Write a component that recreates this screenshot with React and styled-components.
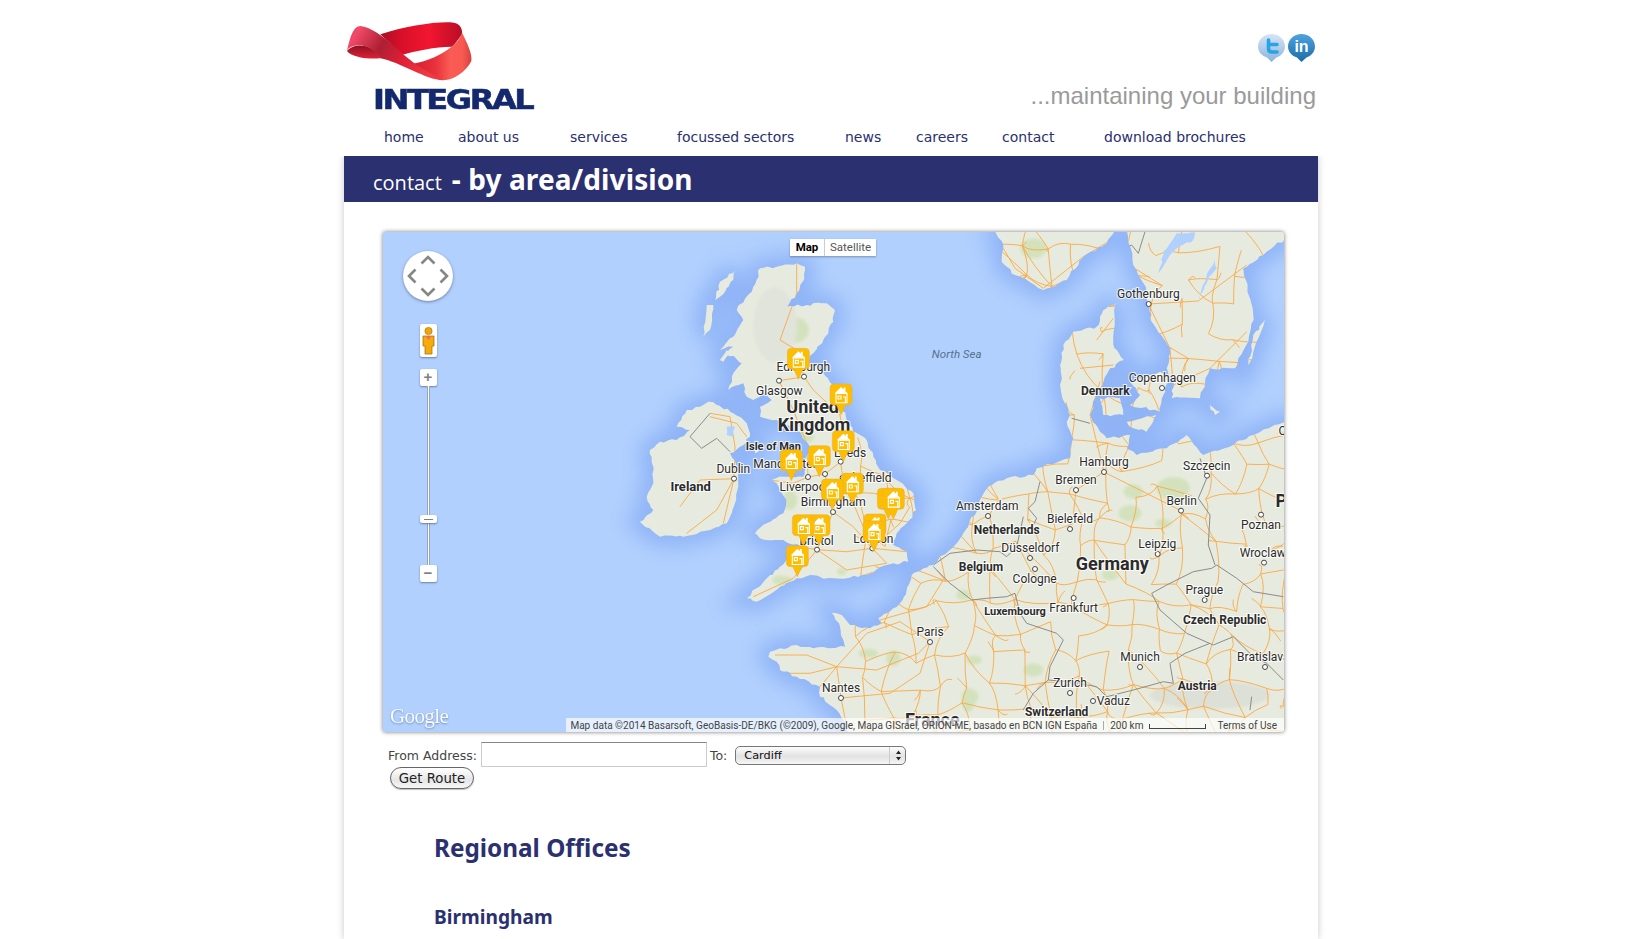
import React from "react";
import styled, { createGlobalStyle } from "styled-components";

// map data is noted in crop units (3x) from a few origins, converted to page px
const Z4 = [620, 250];
const Z5 = [900, 225];
const Z6 = [900, 500];
const Z8 = [730, 540];

const makeRandom = (start) => {
  let seed = start;
  return () => {
    seed = (seed * 16807) % 2147483647;
    return seed / 2147483647;
  };
};

const pts = (o, s) =>
  s
    .trim()
    .split(/\s+/)
    .map((p) => {
      const [x, y] = p.split(",").map(Number);
      return [o[0] + x / 3, o[1] + y / 3];
    });
const line = (list) =>
  "M" + list.map((p) => `${p[0].toFixed(1)} ${p[1].toFixed(1)}`).join("L");

// coasts are never straight: break each edge up and push the points about a bit
const coastRandom = makeRandom(977);
const shape = (list) => {
  const out = [];
  list.forEach((p, i) => {
    const q = list[(i + 1) % list.length];
    out.push(p);
    const len = Math.hypot(q[0] - p[0], q[1] - p[1]);
    const parts = Math.min(6, Math.floor(len / 3.5));
    for (let k = 1; k < parts; k++) {
      const t = k / parts;
      out.push([
        p[0] + (q[0] - p[0]) * t + (coastRandom() - 0.5) * 2.6,
        p[1] + (q[1] - p[1]) * t + (coastRandom() - 0.5) * 2.6,
      ]);
    }
  });
  return line(out) + "Z";
};

const BRITAIN = shape(
  pts(
    Z4,
    `420,55 470,50 530,40 555,50 548,95 530,130 500,170 560,165 620,160 645,180 640,215 610,270 580,310 550,345 590,350 610,370
     640,405 665,470 680,510 700,545 740,570 760,620 780,660 830,690 880,730 888,780 860,820 830,850 815,880 860,905 865,935 800,945
     740,975 680,985 620,985 570,975 530,985 480,1010 410,1055 380,1045 440,985 480,950 510,925 540,890 480,870 420,865 405,850 440,820
     490,790 500,750 470,700 455,690 490,680 510,680 550,680 560,650 545,640 570,590 540,545 490,520 470,510 420,500 420,470 455,450
     440,430 400,450 380,440 370,400 325,420 340,370 365,340 320,310 340,290 300,300 340,260 370,210 350,180 400,110`
  )
);
const IRELAND = shape(
  pts(
    Z4,
    `265,455 290,465 340,490 380,520 390,560 360,590 330,610 355,660 355,710 345,760 320,820 270,840 190,860 120,860 60,815 100,780
     80,740 100,700 100,650 90,600 120,575 170,570 210,540 170,530 200,480 240,470`
  )
);
const CONTINENT = shape([
  ...pts(
    Z5,
    `650,235 610,255 590,305 520,320 490,360 482,430 485,510 510,570 500,590 520,640 510,700 410,730 400,750 320,760 265,785 245,815 225,870`
  ),
  ...pts(Z6, `210,60 190,100 170,130 100,195 40,220 20,270 0,310`),
  ...pts(
    Z8,
    `490,205 445,235 455,250 420,265 360,255 335,225 305,218 330,260 340,300 345,320 250,325 200,315 120,335 115,350 140,365 150,390
     200,410 270,440 270,470 320,510 350,560 360,590`
  ),
  [1295, 740],
  [1295, 422],
  ...pts(
    Z5,
    `1155,590 1060,630 1000,660 910,690 860,630 835,650 800,670 710,690 680,670 690,630 620,640 600,620 570,570 585,520 630,430 672,405 640,360 645,240`
  ),
]);
const ISLANDS = [
  pts(Z5, `285,15 310,60 305,110 345,150 430,195 500,165 550,95 620,55 645,15`),
  pts(
    Z5,
    `680,15 700,120 740,200 745,235 755,290 790,340 810,370 800,430 820,470 815,520 900,520 930,430 1005,430 1045,350 1060,270 1030,130 1090,90 1155,40 1155,15`
  ),
  pts(Z5, `690,470 780,440 810,460 790,510 780,560 690,540 720,510`),
  pts(Z5, `600,520 660,520 670,570 610,570`),
  pts(Z5, `680,590 770,570 740,620 700,610`),
  pts(Z5, `930,540 960,560 945,570`),
  pts(Z5, `1045,420 1095,285 1060,330`),
  pts(Z4, `345,60 300,95 285,150 300,140 340,90`),
  pts(Z4, `260,165 280,165 270,240 250,260`),
  pts(Z4, `300,330 320,300 330,310 310,335`),
  pts(Z4, `405,590 412,585 415,605 405,610`),
]
  .map(shape)
  .join(" ");
const LAND = [BRITAIN, IRELAND, CONTINENT, ISLANDS].join(" ");
const LAKES = [
  pts(Z5, `775,145 830,70 880,45 885,22 830,25 790,90`),
  pts(Z5, `895,225 915,170 945,95 950,130 920,175`),
  pts(Z4, `320,530 345,530 340,560 320,555`),
]
  .map(shape)
  .join(" ");

const GREEN = [
  [Z4, 525, 240, 42, 38],
  [Z4, 555, 560, 28, 20],
  [Z4, 510, 750, 22, 30],
  [Z4, 480, 990, 24, 14],
  [Z5, 400, 70, 40, 30],
  [Z5, 820, 790, 50, 35],
  [Z5, 700, 800, 30, 22],
  [Z6, 190, 285, 22, 16],
  [Z6, 630, 225, 25, 16],
  [Z6, 220, 480, 22, 14],
  [Z6, 400, 510, 30, 20],
  [Z6, 210, 590, 26, 24],
  [Z6, 690, 40, 35, 25],
  [Z6, 790, 70, 25, 14],
  [Z8, 415, 340, 30, 14],
  [Z8, 490, 355, 22, 24],
  [Z8, 715, 480, 20, 36],
  [Z8, 170, 125, 18, 16],
  [Z8, 335, 95, 14, 10],
  [Z8, 740, 360, 16, 12],
];

// dense road net for the continent, seeded so that it is the same each run
const makeRoads = () => {
  const rnd = makeRandom(42);
  const step = 27;
  const cols = 17;
  const rows = 20;
  const grid = [];
  for (let r = 0; r < rows; r++) {
    const row = [];
    for (let c = 0; c < cols; c++) {
      row.push([
        860 + c * step + (rnd() - 0.5) * 18,
        225 + r * step + (rnd() - 0.5) * 18,
      ]);
    }
    grid.push(row);
  }
  let out = "";
  const seg = (a, b) => {
    const mx = (a[0] + b[0]) / 2 + (rnd() - 0.5) * 11;
    const my = (a[1] + b[1]) / 2 + (rnd() - 0.5) * 11;
    out += `M${a[0].toFixed(1)} ${a[1].toFixed(1)}Q${mx.toFixed(1)} ${my.toFixed(1)} ${b[0].toFixed(1)} ${b[1].toFixed(1)}`;
  };
  for (let r = 0; r < rows; r++) {
    for (let c = 0; c < cols; c++) {
      const p = grid[r][c];
      const chance = p[1] < 430 ? 0.45 : 0.8;
      if (c + 1 < cols && rnd() < chance) seg(p, grid[r][c + 1]);
      if (r + 1 < rows && rnd() < chance) seg(p, grid[r + 1][c]);
      if (c + 1 < cols && r + 1 < rows && rnd() < 0.2) seg(p, grid[r + 1][c + 1]);
      if (rnd() < 0.35)
        seg(p, [p[0] + (rnd() - 0.5) * 26, p[1] + (rnd() - 0.5) * 26]);
    }
  }
  return out;
};

const WEST_ROADS = [
  [Z4, "477,392 552,380 580,420 660,495 670,560 662,635 668,683 700,760 757,895"],
  [Z4, "477,392 520,480 560,580 564,681 615,672 662,635"],
  [Z4, "615,672 639,786 591,899 480,880"],
  [Z4, "639,786 700,830 757,895 860,905"],
  [Z4, "591,899 680,905 757,895 840,820 870,770"],
  [Z4, "591,899 520,985 400,1040"],
  [Z4, "757,895 800,940 680,960 591,899"],
  [Z4, "450,690 520,700 564,681"],
  [Z4, "530,40 530,130 480,270 530,300 552,380"],
  [Z4, "342,686 240,690 180,770"],
  [Z4, "342,686 290,780 200,850"],
  [Z4, "342,686 345,590 330,500 270,490"],
  [Z4, "342,686 310,820"],
  [Z4, "270,500 350,520 380,560"],
  [Z8, "135,345 230,345 320,380 410,280 510,245 600,305"],
  [Z8, "320,380 333,474 350,560"],
  [Z8, "320,380 440,390 565,340 600,305"],
  [Z8, "150,400 240,400 320,380 270,440"],
  [Z8, "450,240 590,200 640,120 560,90"],
  [Z8, "333,474 480,460 570,400 600,305"],
  [Z5, "310,70 345,130 430,190 550,95 625,50"],
  [Z5, "745,237 810,370 820,480"],
  [Z5, "745,237 895,228 1040,120"],
  [Z5, "820,480 930,430 1040,320"],
  [Z5, "600,470 570,570 612,741"],
  [Z5, "612,741 528,795 520,870"],
  [Z5, "612,741 843,857"],
  [Z5, "590,345 640,280"],
  [Z5, "540,430 640,420"],
]
  .map(([o, s]) => line(pts(o, s)))
  .join("");
const ROADS = makeRoads() + WEST_ROADS;

const BORDERS = [
  [Z4, "270,490 210,560 245,595 290,565 330,605"],
  [Z5, "420,770 405,830 385,850 410,880 400,900"],
  [Z6, "370,50 350,140 320,170 300,155 230,150 150,160 100,195"],
  [Z6, "100,200 150,250 215,300 260,295 320,290 345,280 360,340 380,370 470,400 490,420 450,500 445,540 400,580 370,630"],
  [Z6, "445,540 510,545 590,560 620,590 700,570 790,545 820,550 810,490 855,460 930,430"],
  [Z6, "755,280 800,255 880,215 935,205 950,195 1010,235 1060,275 1150,290"],
  [Z6, "780,330 860,400 940,435 1000,410 1060,470 1100,490 1150,540"],
  [Z6, "755,280 780,330"],
  [Z5, "900,700 920,760 895,820 930,870 925,960 945,1020"],
  [Z5, "515,580 570,595"],
  [Z5, "655,80 695,60 715,85 735,20"],
  [Z6, "1055,590 1050,630"],
]
  .map(([o, s]) => line(pts(o, s)))
  .join("");

const CITY_DOTS = [
  [Z4, 477, 392], [Z4, 552, 380], [Z4, 342, 686], [Z4, 615, 672], [Z4, 564, 681],
  [Z4, 662, 635], [Z4, 639, 786], [Z4, 591, 899], [Z4, 757, 895], [Z4, 668, 683],
  [Z5, 746, 237], [Z5, 786, 489], [Z5, 612, 741], [Z5, 921, 752], [Z5, 528, 795],
  [Z5, 264, 873], [Z5, 843, 857], [Z6, 510, 87], [Z6, 1083, 44], [Z6, 390, 174],
  [Z6, 405, 207], [Z6, 773, 162], [Z6, 1092, 188], [Z6, 914, 300], [Z6, 521, 294],
  [Z6, 90, 426], [Z6, 720, 501], [Z6, 1095, 501], [Z6, 510, 579], [Z6, 579, 603],
  [Z8, 333, 474],
];

const LABELS = [
  [Z4, 550, 352, "Edinburgh"], [Z4, 478, 424, "Glasgow"], [Z4, 578, 468, "United", "big"],
  [Z4, 582, 524, "Kingdom", "big"], [Z4, 460, 588, "Isle of Man", "small"],
  [Z4, 495, 642, "Manchester"], [Z4, 690, 608, "Leeds"], [Z4, 552, 712, "Liverpool"],
  [Z4, 640, 757, "Birmingham"], [Z4, 745, 685, "Sheffield"], [Z4, 340, 657, "Dublin"],
  [Z4, 212, 710, "Ireland", "mid"], [Z4, 760, 866, "London"], [Z4, 590, 872, "Bristol"],
  [Z5, 170, 387, "North Sea", "sea"], [Z5, 745, 208, "Gothenburg"], [Z5, 787, 460, "Copenhagen"],
  [Z5, 616, 499, "Denmark", "region"], [Z5, 612, 712, "Hamburg"], [Z5, 920, 724, "Szczecin"],
  [Z5, 528, 766, "Bremen"], [Z5, 262, 843, "Amsterdam"], [Z5, 845, 828, "Berlin"],
  [Z6, 510, 57, "Bielefeld"], [Z6, 1083, 75, "Poznan"], [Z6, 320, 91, "Netherlands", "region"],
  [Z6, 391, 145, "Düsseldorf"], [Z6, 243, 202, "Belgium", "region"], [Z6, 404, 238, "Cologne"],
  [Z6, 637, 191, "Germany", "big"], [Z6, 772, 133, "Leipzig"], [Z6, 1088, 160, "Wroclaw"],
  [Z6, 913, 271, "Prague"], [Z6, 974, 361, "Czech Republic", "region"], [Z6, 345, 334, "Luxembourg", "small"],
  [Z6, 521, 325, "Frankfurt"], [Z6, 90, 397, "Paris"], [Z6, 720, 472, "Munich"],
  [Z6, 1090, 472, "Bratislava"], [Z6, 892, 559, "Austria", "region"], [Z6, 510, 550, "Zurich"],
  [Z6, 640, 604, "Vaduz"], [Z6, 470, 637, "Switzerland", "region"], [Z8, 333, 445, "Nantes"],
  [Z8, 607, 538, "France", "big"], [Z5, 1211, 825, "Poland", "big"], [Z5, 1195, 618, "Olsztyn"],
];

const MARKERS = [
  [535, 388], [663, 495], [670, 635], [598, 680], [514, 692], [697, 762], [637, 780],
  [805, 808], [820, 808], [765, 885], [762, 905], [597, 887], [550, 887], [532, 980],
];

const NAV_ITEMS = [
  ["home", 74],
  ["about us", 112],
  ["services", 107],
  ["focussed sectors", 168],
  ["news", 71],
  ["careers", 86],
  ["contact", 102],
  ["download brochures", 160],
];

const App = () => {
  return (
    <>
      <GlobalStyle />
      <Page>
        <Header>
          <Logo>
            <svg width="140" height="70" viewBox="0 0 420 210">
              <defs>
                <linearGradient id="bandTop" x1="0" x2="1" y1="0" y2="0">
                  <stop offset="0" stopColor="#a80f24" />
                  <stop offset="0.25" stopColor="#d80f2a" />
                  <stop offset="0.6" stopColor="#f21630" />
                  <stop offset="1" stopColor="#b90d26" />
                </linearGradient>
                <linearGradient id="bandFall" x1="0" x2="1" y1="0" y2="0">
                  <stop offset="0" stopColor="#d81a30" />
                  <stop offset="0.4" stopColor="#e8323c" />
                  <stop offset="0.65" stopColor="#fa5c55" />
                  <stop offset="0.85" stopColor="#f85a52" />
                  <stop offset="1" stopColor="#d3423c" />
                </linearGradient>
                <linearGradient id="bandLeft" x1="0" x2="1" y1="0" y2="0.35">
                  <stop offset="0" stopColor="#d62a45" />
                  <stop offset="0.12" stopColor="#f24b6b" />
                  <stop offset="0.42" stopColor="#ad1f33" />
                  <stop offset="0.7" stopColor="#e01f36" />
                  <stop offset="1" stopColor="#ee3a42" />
                </linearGradient>
                <linearGradient id="bandUnder" x1="0" x2="0" y1="0" y2="1">
                  <stop offset="0" stopColor="#8f1022" />
                  <stop offset="1" stopColor="#e02238" />
                </linearGradient>
              </defs>
              <path
                d="M115 55C190 30 290 15 335 20C355 22 362 40 360 55C345 75 335 90 329 92C280 92 220 105 179 117C160 95 135 75 115 55Z"
                fill="url(#bandTop)"
              />
              <path
                d="M360 50C375 80 392 115 388 135C370 170 335 190 310 192C280 190 240 165 209 144C260 135 300 115 329 92C345 80 355 65 360 50Z"
                fill="url(#bandFall)"
              />
              <path
                d="M15 105C25 90 50 85 70 90C95 97 110 115 115 127C80 130 30 125 15 105Z"
                fill="url(#bandUnder)"
              />
              <path
                d="M15 103C25 60 35 30 55 30C85 32 120 60 150 85C180 112 215 145 260 168C285 182 300 190 312 192C280 195 250 180 215 165C180 150 140 130 115 127C100 100 70 85 45 88C30 90 20 95 15 103Z"
                fill="url(#bandLeft)"
              />
            </svg>
            <LogoWord>INTEGRAL</LogoWord>
          </Logo>
          <HeaderSide>
            <Social>
              <svg width="29" height="30" viewBox="0 0 29 30">
                <defs>
                  <linearGradient id="twBubble" x1="0" x2="0" y1="0" y2="1">
                    <stop offset="0" stopColor="#d6e5f6" />
                    <stop offset="1" stopColor="#8cb3de" />
                  </linearGradient>
                </defs>
                <path
                  d="M14.5 1C22 1 28 6.5 28 13.5C28 19 24 23 19.5 24.5L14.5 29L10 24.5C5 23 1 19 1 13.5C1 6.5 7 1 14.5 1Z"
                  fill="url(#twBubble)"
                />
                <path
                  d="M11.5 7V15.5Q11.5 19 15 19H20M11.5 11.5H20"
                  fill="none"
                  stroke="#27a4e4"
                  strokeWidth="3.6"
                  strokeLinecap="round"
                />
              </svg>
              <svg width="29" height="30" viewBox="0 0 29 30">
                <defs>
                  <linearGradient id="inBubble" x1="0" x2="0" y1="0" y2="1">
                    <stop offset="0" stopColor="#4ea3df" />
                    <stop offset="1" stopColor="#1b6ba6" />
                  </linearGradient>
                </defs>
                <path
                  d="M14.5 1C22 1 28 6.5 28 13.5C28 19 24 23 19.5 24.5L14.5 29L10 24.5C5 23 1 19 1 13.5C1 6.5 7 1 14.5 1Z"
                  fill="url(#inBubble)"
                />
                <LinkedText x="14.5" y="19">
                  in
                </LinkedText>
              </svg>
            </Social>
            <Tagline>...maintaining your building</Tagline>
          </HeaderSide>
        </Header>

        <Nav>
          {NAV_ITEMS.map(([label, width]) => (
            <NavLink key={label} href="#" $width={width}>
              {label}
            </NavLink>
          ))}
        </Nav>

        <Panel>
          <Banner>
            <BannerLight>contact</BannerLight>
            <BannerBold>- by area/division</BannerBold>
          </Banner>

          <Content>
            <MapFrame>
              <MapSvg viewBox="383 232 901 500">
                <defs>
                  <clipPath id="landClip">
                    <path d={LAND} />
                  </clipPath>
                  <filter id="coastGlow" x="-20%" y="-20%" width="140%" height="140%">
                    <feGaussianBlur stdDeviation="10" />
                  </filter>
                  <filter id="softGreen" x="-30%" y="-30%" width="160%" height="160%">
                    <feGaussianBlur stdDeviation="1.4" />
                  </filter>
                  <g id="pin">
                    <path
                      d="M4 0H18A4 4 0 0 1 22 4V17A4 4 0 0 1 18 21H15.5L11 31L6.5 21H4A4 4 0 0 1 0 17V4A4 4 0 0 1 4 0Z"
                      fill="#fdbd00"
                      stroke="#e3ad4a"
                      strokeWidth="0.5"
                    />
                    <path
                      d="M4.5 9.5L11 3L13.5 5.4V3.4H15.4V7.2L17.8 9.5Z"
                      fill="#fff"
                    />
                    <path
                      d="M6 9.5H17V18.8H6ZM8 12H11V15H8ZM13 13H15.4V18.8"
                      fill="none"
                      stroke="#fff"
                      strokeWidth="1.1"
                    />
                  </g>
                </defs>
                <rect x="383" y="232" width="901" height="500" fill="#b1d0fe" />
                <path
                  d={LAND}
                  fill="#8cb1f6"
                  stroke="#8cb1f6"
                  strokeWidth="20"
                  opacity="0.9"
                  filter="url(#coastGlow)"
                />
                <path d={LAND} fill="#e7ebdf" />
                <g clipPath="url(#landClip)">
                  <g filter="url(#softGreen)">
                    {GREEN.map(([o, x, y, rx, ry], i) => (
                      <ellipse
                        key={i}
                        cx={o[0] + x / 3}
                        cy={o[1] + y / 3}
                        rx={rx / 3}
                        ry={ry / 3}
                        fill="#d3e2bd"
                      />
                    ))}
                    <ellipse cx="1210" cy="695" rx="60" ry="14" fill="#dde0d7" />
                    <ellipse cx="775" cy="325" rx="22" ry="38" fill="#e1e4da" />
                  </g>
                  <path d={ROADS} fill="none" stroke="#f9a943" strokeWidth="0.9" />
                  <path d={LAKES} fill="#b1d0fe" />
                  <path d={BORDERS} fill="none" stroke="#8b8b88" strokeWidth="1" />
                </g>
                {CITY_DOTS.map(([o, x, y], i) => (
                  <circle
                    key={i}
                    cx={o[0] + x / 3}
                    cy={o[1] + y / 3}
                    r="2.5"
                    fill="#fff"
                    stroke="#333"
                    strokeWidth="0.9"
                  />
                ))}
                {LABELS.map(([o, x, y, text, kind]) => (
                  <MapLabel key={text} x={o[0] + x / 3} y={o[1] + y / 3} $kind={kind}>
                    {text}
                  </MapLabel>
                ))}
                {MARKERS.map(([x, y], i) => (
                  <use
                    key={i}
                    href="#pin"
                    x={Z4[0] + x / 3 - 11}
                    y={Z4[1] + y / 3 - 31}
                  />
                ))}
              </MapSvg>

              <MapControls>
                <PanControl>
                  <svg width="50" height="50" viewBox="0 0 50 50">
                    <path
                      d="M18.5 12.5L25 6L31.5 12.5M18.5 37.5L25 44L31.5 37.5M12.5 18.5L6 25L12.5 31.5M37.5 18.5L44 25L37.5 31.5"
                      fill="none"
                      stroke="#868686"
                      strokeWidth="2.6"
                    />
                  </svg>
                </PanControl>
                <PegmanBox>
                  <svg width="13" height="28" viewBox="0 0 13 28">
                    <circle cx="6.5" cy="4" r="3.6" fill="#f0a70a" stroke="#b86f00" strokeWidth="0.7" />
                    <path
                      d="M1 9H12V19H10V27H3V19H1Z"
                      fill="#f5ab0c"
                      stroke="#a86400"
                      strokeWidth="0.7"
                    />
                    <path d="M3.5 9H9.5L6.5 13Z" fill="#ec6a6a" />
                  </svg>
                </PegmanBox>
                <ZoomStack>
                  <ZoomButton>+</ZoomButton>
                  <ZoomTrack>
                    <ZoomHandle />
                  </ZoomTrack>
                  <ZoomButton>−</ZoomButton>
                </ZoomStack>
              </MapControls>

              <MapTypes>
                <MapType $active>Map</MapType>
                <MapType>Satellite</MapType>
              </MapTypes>

              <GoogleMark>Google</GoogleMark>

              <Attribution>
                <span>
                  Map data ©2014 Basarsoft, GeoBasis-DE/BKG (©2009), Google, Mapa GISrael,
                  ORION-ME, basado en BCN IGN España
                </span>
                <ScaleText>200 km</ScaleText>
                <ScaleBar />
                <span>Terms of Use</span>
              </Attribution>
            </MapFrame>

            <RouteForm>
              <RouteRow>
                <FormLabel htmlFor="from">From Address:</FormLabel>
                <AddressInput id="from" type="text" />
                <FormLabel htmlFor="to">To:</FormLabel>
                <SelectWrap>
                  <OfficeSelect id="to" defaultValue="Cardiff">
                    <option>Cardiff</option>
                  </OfficeSelect>
                  <SelectArrows>
                    <svg width="7" height="11" viewBox="0 0 7 11">
                      <path d="M3.5 0.5L6 4H1ZM3.5 10.5L6 7H1Z" fill="#222" />
                    </svg>
                  </SelectArrows>
                </SelectWrap>
              </RouteRow>
              <RouteButton type="button">Get Route</RouteButton>
            </RouteForm>

            <Offices>
              <OfficesTitle>Regional Offices</OfficesTitle>
              <OfficeName>Birmingham</OfficeName>
            </Offices>
          </Content>
        </Panel>
      </Page>
    </>
  );
};

const GlobalStyle = createGlobalStyle`
  html, body {
    margin: 0;
    height: 100%;
    overflow: hidden;
    background: #fff;
  }
`;

const Page = styled.div`
  width: 974px;
  margin-left: 344px;
  font-family: "DejaVu Sans", Verdana, sans-serif;
`;

const Header = styled.header`
  display: flex;
  justify-content: space-between;
  height: 120px;
`;

const Logo = styled.div`
  display: flex;
  flex-direction: column;
  padding-top: 16px;
  margin-left: -2px;
  svg {
    display: block;
  }
`;

const LogoWord = styled.div`
  margin: 2px 0 0 31px;
  font-family: "DejaVu Sans", sans-serif;
  font-weight: 700;
  font-size: 26px;
  line-height: 24px;
  letter-spacing: -2px;
  color: #14286e;
  -webkit-text-stroke: 0.5px #14286e;
  transform: scaleX(1.235);
  transform-origin: left center;
`;

const HeaderSide = styled.div`
  display: flex;
  flex-direction: column;
  align-items: flex-end;
  padding: 33px 2px 0 0;
`;

const Social = styled.div`
  display: flex;
  gap: 1px;
  height: 30px;
`;

const LinkedText = styled.text`
  font-family: "Liberation Sans", Arial, sans-serif;
  font-size: 16px;
  font-weight: 700;
  fill: #fff;
  text-anchor: middle;
`;

const Tagline = styled.div`
  margin-top: 18px;
  font-family: "Liberation Sans", Arial, sans-serif;
  font-size: 24px;
  line-height: 30px;
  color: #9a9a9a;
`;

const Nav = styled.nav`
  display: flex;
  align-items: center;
  height: 34px;
  margin-bottom: 2px;
  padding-left: 40px;
`;

const NavLink = styled.a`
  flex: none;
  width: ${(props) => props.$width}px;
  font-size: 14px;
  color: #2a2f6f;
  text-decoration: none;
  white-space: nowrap;
`;

const Panel = styled.main`
  height: 783px;
  background: #fff;
  box-shadow: 0 0 7px rgba(0, 0, 0, 0.22);
  clip-path: inset(0 -12px -12px -12px);
`;

const Banner = styled.div`
  display: flex;
  align-items: baseline;
  gap: 10px;
  height: 46px;
  padding-left: 29px;
  line-height: 46px;
  background: #2b3070;
  color: #fff;
`;

const BannerLight = styled.span`
  font-family: "Open Sans", sans-serif;
  font-size: 20px;
`;

const BannerBold = styled.span`
  font-family: "Noto Sans", sans-serif;
  font-size: 28px;
  font-weight: 700;
  letter-spacing: 0.1px;
`;

const Content = styled.div`
  padding: 30px 0 0 39px;
`;

const MapFrame = styled.div`
  position: relative;
  width: 901px;
  height: 500px;
  overflow: hidden;
  border-radius: 2px;
  box-shadow: 0 0 4px rgba(0, 0, 0, 0.55);
  background: #b1d0fe;
`;

const MapSvg = styled.svg`
  display: block;
  width: 901px;
  height: 500px;
`;

const LABEL_SIZES = { big: 18, mid: 13, small: 11, region: 12, sea: 11.5 };

const MapLabel = styled.text`
  font-family: Roboto, sans-serif;
  font-size: ${(props) => LABEL_SIZES[props.$kind] || 12}px;
  font-weight: ${(props) => (!props.$kind || props.$kind === "sea" ? 400 : 700)};
  font-style: ${(props) => (props.$kind === "sea" ? "italic" : "normal")};
  fill: ${(props) => (props.$kind === "sea" ? "#56708f" : "#2b2b2b")};
  stroke: rgba(255, 255, 255, 0.8);
  stroke-width: ${(props) => (props.$kind === "sea" ? 0 : 2.2)}px;
  paint-order: stroke;
  text-anchor: middle;
  dominant-baseline: central;
`;

const MapControls = styled.div`
  position: absolute;
  left: 20px;
  top: 19px;
  display: flex;
  flex-direction: column;
  align-items: center;
  width: 50px;
`;

const PanControl = styled.div`
  width: 50px;
  height: 50px;
  border-radius: 50%;
  background: #fff;
  box-shadow: 0 1px 3px rgba(60, 70, 110, 0.6);
  svg {
    display: block;
  }
`;

const PegmanBox = styled.div`
  display: flex;
  align-items: center;
  justify-content: center;
  width: 17px;
  height: 33px;
  margin-top: 23px;
  border-radius: 2px;
  background: #fff;
  box-shadow: 0 1px 2px rgba(60, 70, 110, 0.6);
`;

const ZoomStack = styled.div`
  display: flex;
  flex-direction: column;
  align-items: center;
  margin-top: 12px;
`;

const ZoomButton = styled.div`
  width: 17px;
  height: 17px;
  border-radius: 2px;
  background: #fff;
  box-shadow: 0 1px 2px rgba(60, 70, 110, 0.6);
  font-family: "Liberation Sans", sans-serif;
  font-size: 15px;
  font-weight: 700;
  line-height: 16px;
  text-align: center;
  color: #808080;
`;

const ZoomTrack = styled.div`
  position: relative;
  width: 1px;
  height: 179px;
  border: solid #97a3bd;
  border-width: 0 1px;
  background: #fff;
`;

const ZoomHandle = styled.div`
  position: absolute;
  left: -8px;
  top: 129px;
  width: 17px;
  height: 8px;
  border-radius: 2px;
  background: #fff;
  box-shadow: 0 1px 2px rgba(60, 70, 110, 0.6);
  &::after {
    content: "";
    position: absolute;
    left: 4px;
    top: 3.5px;
    width: 9px;
    height: 1px;
    background: #808080;
  }
`;

const MapTypes = styled.div`
  position: absolute;
  top: 7px;
  left: 407px;
  display: flex;
  gap: 1px;
  background: #ccc;
  box-shadow: 0 1px 2px rgba(0, 0, 0, 0.3);
`;

const MapType = styled.div`
  height: 17px;
  padding: 0 5px;
  min-width: 24px;
  background: #fff;
  font-family: Roboto, sans-serif;
  font-size: 11.5px;
  line-height: 17px;
  text-align: center;
  font-weight: ${(props) => (props.$active ? 700 : 400)};
  color: ${(props) => (props.$active ? "#000" : "#565656")};
`;

const GoogleMark = styled.div`
  position: absolute;
  left: 7px;
  bottom: 4px;
  font-family: "Liberation Serif", serif;
  font-size: 21px;
  line-height: 24px;
  letter-spacing: -0.6px;
  color: #fff;
  opacity: 0.9;
  text-shadow: 0 1px 2px rgba(60, 70, 90, 0.55);
`;

const Attribution = styled.div`
  position: absolute;
  right: 0;
  bottom: 0;
  box-sizing: border-box;
  display: flex;
  align-items: center;
  height: 14px;
  padding: 1px 7px 0 4px;
  background: rgba(255, 255, 255, 0.68);
  font-family: Roboto, sans-serif;
  font-size: 10.05px;
  line-height: 13px;
  color: #444;
  white-space: nowrap;
`;

const ScaleText = styled.span`
  margin-left: 6px;
  padding-left: 6px;
  border-left: 1px solid #aaa;
  line-height: 9px;
`;

const ScaleBar = styled.span`
  width: 55px;
  height: 4px;
  margin: 1px 12px 0 5px;
  border: solid #444;
  border-width: 0 1px 1px;
`;

const RouteForm = styled.form`
  padding: 10px 0 0 5px;
`;

const RouteRow = styled.div`
  display: flex;
  align-items: center;
  height: 25px;
`;

const FormLabel = styled.label`
  padding-top: 2px;
  font-size: 12.5px;
  color: #444;
`;

const AddressInput = styled.input`
  box-sizing: border-box;
  width: 226px;
  height: 25px;
  margin: 0 3px 0 4px;
  border: 1px solid #ccc;
  border-top-color: #888;
  background: #fff;
`;

const SelectWrap = styled.div`
  position: relative;
  width: 171px;
  height: 19px;
  margin: 2px 0 0 8px;
`;

const OfficeSelect = styled.select`
  appearance: none;
  box-sizing: border-box;
  display: block;
  width: 100%;
  height: 100%;
  padding: 0 0 0 8px;
  border: 1px solid #777;
  border-radius: 5px;
  background: linear-gradient(#fdfdfd, #e2e2e2 55%, #f6f6f6);
  font-family: "DejaVu Sans", sans-serif;
  font-size: 11.3px;
  color: #111;
`;

const SelectArrows = styled.span`
  position: absolute;
  right: 0;
  top: 1px;
  display: flex;
  align-items: center;
  justify-content: center;
  width: 16px;
  height: 17px;
  border-left: 1px solid #ccc;
  pointer-events: none;
`;

const RouteButton = styled.button`
  display: block;
  box-sizing: border-box;
  width: 84px;
  height: 22px;
  margin: 0 0 0 2px;
  padding: 0;
  border: 1px solid #666;
  border-radius: 11px;
  background: linear-gradient(#fff, #e6e6e6 60%, #f7f7f7);
  box-shadow: 0 1px 1px rgba(0, 0, 0, 0.25);
  font-family: "DejaVu Sans", sans-serif;
  font-size: 13.3px;
  color: #222;
`;

const Offices = styled.section`
  padding: 43px 0 0 51px;
  color: #2b3070;
`;

const OfficesTitle = styled.h2`
  margin: 0;
  font-family: "Noto Sans", sans-serif;
  font-size: 24.3px;
  line-height: 32px;
  font-weight: 700;
`;

const OfficeName = styled.h3`
  margin: 41px 0 0;
  font-family: "Noto Sans", sans-serif;
  font-size: 19.2px;
  line-height: 24px;
  font-weight: 700;
`;

export default App;
